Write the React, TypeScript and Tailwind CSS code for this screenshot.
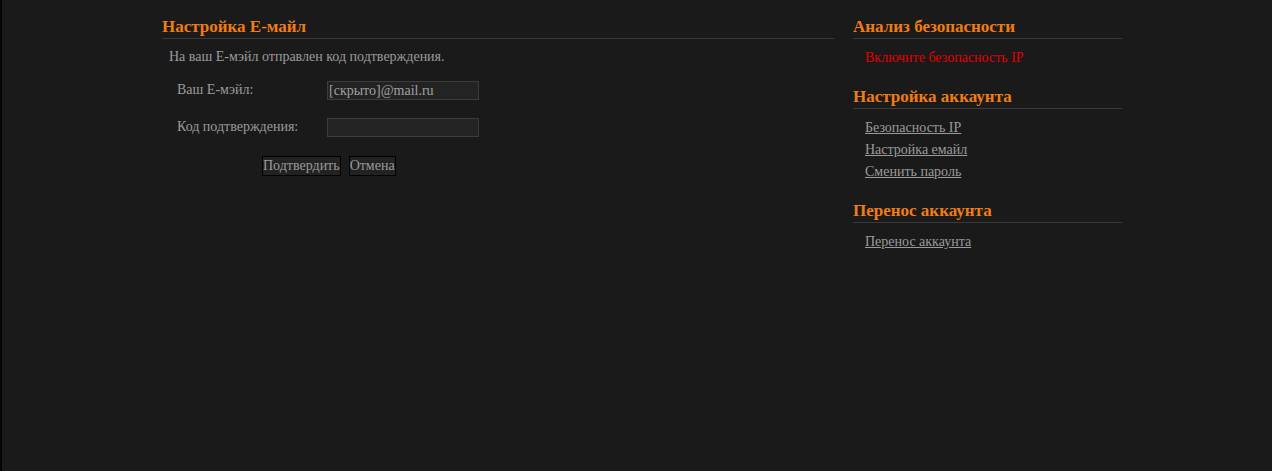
import React from 'react';

const serif = { fontFamily: '"Liberation Serif", "Times New Roman", serif' };

function SideSection({ title, children }: { title: string; children: React.ReactNode }) {
  return (
    <div className="mb-[18px]">
      <h2 className="text-[17px] font-bold text-[#f07c14] leading-[20px] border-b border-[#3a3a3a] pb-[1px]">{title}</h2>
      <ul className="pl-[12px] pt-[8px] text-[14px] leading-[22px]">{children}</ul>
    </div>
  );
}

export default function App() {
  return (
    <div style={serif} className="min-h-[471px] bg-[#1a1a1a] border-l-2 border-[#050505] text-[#9a9a9a]">
      <div className="flex pl-[160px] pt-[17px]">
        {/* Main column */}
        <div className="w-[672px]">
          <h1 className="text-[17px] font-bold text-[#f07c14] leading-[20px] border-b border-[#3a3a3a] pb-[1px]">
            Настройка E-майл
          </h1>
          <p className="pl-[7px] pt-[9px] text-[14px] leading-[18px]">На ваш E-мэйл отправлен код подтверждения.</p>

          <div className="pl-[15px] pt-[15px] text-[14px]">
            <div className="flex items-start h-[37px]">
              <span className="w-[150px] leading-[18px]">Ваш E-мэйл:</span>
              <div className="w-[152px] h-[19px] bg-[#232323] border border-[#3c3c3c] px-[1px] leading-[17px] text-[#a0a0a0]">
                [скрыто]@mail.ru
              </div>
            </div>
            <div className="flex items-start h-[37px]">
              <span className="w-[150px] leading-[18px]">Код подтверждения:</span>
              <div className="w-[152px] h-[19px] bg-[#232323] border border-[#3c3c3c]" />
            </div>
          </div>

          <div className="flex gap-[8px] pl-[100px] pt-[1px] text-[14px]">
            <button style={serif} className="h-[20px] px-0 bg-[#222] border border-black leading-[18px] text-[#9a9a9a]">
              Подтвердить
            </button>
            <button style={serif} className="h-[20px] px-0 bg-[#222] border border-black leading-[18px] text-[#9a9a9a]">
              Отмена
            </button>
          </div>
        </div>

        {/* Sidebar */}
        <div className="w-[269px] ml-[19px]">
          <SideSection title="Анализ безопасности">
            <li className="text-[#e00000]">Включите безопасность IP</li>
          </SideSection>
          <SideSection title="Настройка аккаунта">
            <li><a className="underline">Безопасность IP</a></li>
            <li><a className="underline">Настройка емайл</a></li>
            <li><a className="underline">Сменить пароль</a></li>
          </SideSection>
          <SideSection title="Перенос аккаунта">
            <li><a className="underline">Перенос аккаунта</a></li>
          </SideSection>
        </div>
      </div>
    </div>
  );
}
